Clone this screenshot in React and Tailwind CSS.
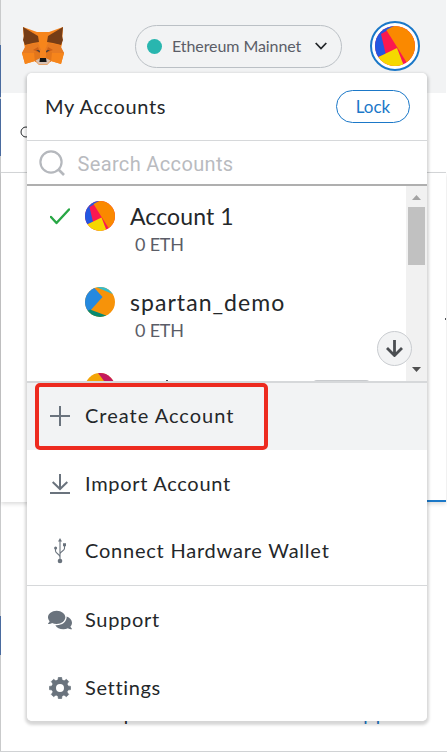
import React from "react";
import { FaComments } from "react-icons/fa";

function Fox() {
  return (
    <svg className="mt-[26px] h-[40px] w-[42px] shrink-0" viewBox="0 0 42 40">
      <path d="M1 1l14 5h12L41 1l-1 17-1 4 3 5-3 11-10-3-4 4h-8l-4-4-10 3L0 27l3-5-1-4z" fill="#f5841f" />
      <path d="M16 6h10l-2 16h-6z" fill="#f6851b" />
      <path d="M1 1l15 9 1 6-6 1-8 2-2-5 1-4z" fill="#763d16" />
      <path d="M41 1L26 10l-1 6 6 1 8 2 2-5-1-4z" fill="#763d16" />
      <path d="M0 27l4-8 12-2 3 7-7 3z" fill="#e77b22" />
      <path d="M42 27l-4-8-12-2-3 7 7 3z" fill="#e77b22" />
      <path d="M0 27h12l1 8-10 3z" fill="#f6851b" />
      <path d="M42 27H30l-1 8 10 3z" fill="#f6851b" />
      <path d="M12 26l6-1 0 8-5 3zM30 26l-6-1 0 8 5 3z" fill="#e2761b" />
      <path d="M11 24l5-3 2 6zM31 24l-5-3-2 6z" fill="#cd6116" />
      <path d="M14 24l3.500.5.5 2zM28 24l-3.500.5-.5 2z" fill="#233447" />
      <path d="M13.500 34.500l4-2h7l4 2-3.500 4h-8z" fill="#d7c1b3" />
      <path d="M18 32h6l.6 4h-7.200z" fill="#161616" />
    </svg>
  );
}

function Jazz({ kind, className }) {
  const id = React.useId();
  return (
    <svg viewBox="0 0 30 30" className={className}>
      <defs>
        <clipPath id={id}><circle cx="15" cy="15" r="15" /></clipPath>
      </defs>
      <g clipPath={`url(#${id})`}>
        {kind === "sun" && (
          <>
            <rect width="30" height="30" fill="#fb1850" />
            <path d="M0 0h15L4.500 6 8 21l-8 3z" fill="#2357e1" />
            <path d="M0 24.500L16.500 16.500 22.500 32H0z" fill="#f5d800" />
            <path d="M8.500 3L16-1h15v29l-6.500.5z" fill="#fa8900" />
          </>
        )}
        {kind === "wave" && (
          <>
            <rect width="30" height="30" fill="#f79309" />
            <path d="M0 0h8.500l9 10L5 24l-5 2z" fill="#2589df" />
            <path d="M11 0h19v8z" fill="#35bccb" />
            <path d="M5 22.500L21 28.500V30H0v-5z" fill="#088a70" />
          </>
        )}
        {kind === "berry" && (
          <>
            <rect width="30" height="30" fill="#f4a507" />
            <path d="M13 0h17v12h-8z" fill="#c4195e" />
          </>
        )}
      </g>
    </svg>
  );
}

function PlusIcon() {
  return (
    <svg width="20" height="20" viewBox="0 0 20 20" fill="none" stroke="#6a737d" strokeWidth="2">
      <path d="M10 0v20M0 10h20" />
    </svg>
  );
}

function ImportIcon() {
  return (
    <svg width="20" height="20" viewBox="0 0 20 20" fill="none" stroke="#6a737d" strokeWidth="2">
      <path d="M10 0v14.500M2.700 8l7.300 7 7.300-7M0 19h20" />
    </svg>
  );
}

function UsbIcon() {
  return (
    <svg width="12" height="26" viewBox="0 0 12 26" fill="none" stroke="#6a737d" strokeWidth="1.100" className="-ml-px">
      <path d="M6 3v20M1.500 10v3c0 2.500 4.500 3 4.500 6M10.500 7v3.500c0 2.500-4.500 3-4.500 5.500" />
      <path d="M6 0L4 3.600h4z" fill="#6a737d" stroke="none" />
      <circle cx="1.600" cy="10" r="1.500" fill="#6a737d" stroke="none" />
      <path d="M9 5.300h3v3H9z" fill="#6a737d" stroke="none" />
      <circle cx="6" cy="23" r="2.300" fill="#6a737d" stroke="none" />
    </svg>
  );
}

function GearIcon() {
  return (
    <svg width="22" height="22" viewBox="0 0 22 22" fill="none" stroke="#6a737d">
      <circle cx="11" cy="11" r="6.200" strokeWidth="4.400" />
      <g fill="#6a737d" stroke="#6a737d" strokeWidth="0.600" strokeLinejoin="round">
        {[0, 45, 90, 135, 180, 225, 270, 315].map((angle) => (
          <path key={angle} d="M9.400.3h3.200l.7 3.700H8.700z" transform={`rotate(${angle} 11 11)`} />
        ))}
      </g>
    </svg>
  );
}

function MenuItem({ icon, label, className, textClass }) {
  return (
    <div className={`flex w-full shrink-0 items-center ${className}`}>
      <span className="ml-[21px] flex w-6 justify-center text-[#6a737d]">{icon}</span>
      <span className={`-mt-[2px] ml-[13px] whitespace-nowrap text-[20px] leading-6 text-[#24272a] ${textClass}`}>{label}</span>
    </div>
  );
}

function Account({ selected, kind, name, nameClass, balance }) {
  return (
    <div className="flex h-[86px] shrink-0 items-start pt-[15px]">
      <div className="ml-[23px] mt-[7px] w-5">
        {selected && (
          <svg width="20" height="17" viewBox="0 0 20 17" fill="none" stroke="#28a745" strokeWidth="2.400">
            <path d="M1 9l5.500 6L19 1.500" strokeLinecap="round" strokeLinejoin="round" />
          </svg>
        )}
      </div>
      <Jazz kind={kind} className="ml-[15px] size-[30px] shrink-0" />
      <div className="ml-[15px] whitespace-nowrap">
        <div className={`h-[31px] text-[23px] leading-[31px] text-[#24272a] ${nameClass}`}>{name}</div>
        <div className="ml-[5px] h-6 text-[18px] leading-6 tracking-[-0.200px] text-[#5b5d67]">{balance}</div>
      </div>
    </div>
  );
}

function AccountMenu() {
  return (
    <div className="absolute left-[27px] top-[73px] flex h-[648px] w-[400px] flex-col overflow-hidden rounded-[5px] bg-white">
      <div className="flex h-[68px] shrink-0 items-center justify-between border-b border-[#d6d8da] pl-[18px] pr-[17px]">
        <span className="-mt-[2px] text-[20px] tracking-[0.650px] text-[#24272a]">My Accounts</span>
        <button className="h-[33px] w-[74px] rounded-full border border-[#1b78c8] text-[17px] leading-none text-[#1b78c8]">Lock</button>
      </div>
      <div className="flex h-[45px] shrink-0 items-center border-b-2 border-[#9b9b9b]/80">
        <svg width="26" height="26" viewBox="0 0 26 26" fill="none" stroke="#b5b8bd" strokeWidth="2.200" className="ml-3">
          <circle cx="12" cy="12" r="10.600" />
          <path d="M19 19l6 6" strokeWidth="2.600" />
        </svg>
        <span className="ml-[12.500px] mt-[2px] font-[Roboto,sans-serif] text-[20px] tracking-[0.350px] text-[#b9bbbf]">Search Accounts</span>
      </div>
      <div className="relative flex h-[195px] shrink-0">
        <div className="flex h-full flex-1 flex-col overflow-hidden">
          <Account selected kind="sun" name="Account 1" nameClass="tracking-[0.100px]" balance="0 ETH" />
          <Account kind="wave" name="spartan_demo" nameClass="tracking-[1.050px]" balance="0 ETH" />
          <div className="flex h-[86px] shrink-0 items-start pt-[15px]">
            <Jazz kind="berry" className="ml-[58px] size-[30px] shrink-0" />
            <div className="ml-auto mr-9 mt-[7px] h-5 w-[57px] rounded bg-[#c8cacd]" />
          </div>
        </div>
        <div className="absolute bottom-0 left-[139px] h-px w-[2px] bg-[#4b4e52]" />
        <div className="flex w-[21px] shrink-0 flex-col items-center bg-[#f1f1f1]">
          <svg width="9" height="5" viewBox="0 0 9 5" className="mt-[9px]"><path d="M0 5l4.500-5L9 5z" fill="#a3a3a3" /></svg>
          <div className="mt-[7px] h-[58px] w-[17px] bg-[#c1c1c1]" />
          <svg width="9" height="5" viewBox="0 0 9 5" className="mb-[9px] mt-auto"><path d="M0 0h9L4.500 5z" fill="#505050" /></svg>
        </div>
        <div className="absolute bottom-[15px] right-[15px] flex size-[35px] items-center justify-center rounded-full border border-[#c9ccd0] bg-[#f2f3f4]">
          <svg width="17" height="17" viewBox="0 0 17 17" fill="none" stroke="#4b4e52" strokeWidth="2.800">
            <path d="M8.500 0v15M1 8l7.500 7.500L16 8" />
          </svg>
        </div>
      </div>
      <MenuItem className="h-[69px] border-t-2 border-[#d6d8da] bg-[#f2f3f4] pb-[2px]" icon={<PlusIcon />} label="Create Account" textClass="tracking-[1px]" />
      <MenuItem className="h-[67px]" icon={<ImportIcon />} label="Import Account" textClass="tracking-[0.700px]" />
      <MenuItem className="h-[68px]" icon={<UsbIcon />} label="Connect Hardware Wallet" textClass="tracking-[0.780px]" />
      <MenuItem className="h-[69px] border-t border-[#d6d8da]" icon={<FaComments size={24} />} label="Support" textClass="tracking-[0.700px]" />
      <MenuItem className="h-[67px]" icon={<GearIcon />} label="Settings" textClass="tracking-[0.650px]" />
    </div>
  );
}

export default function App() {
  return (
    <div className="relative flex h-[752px] w-[447px] overflow-hidden border-b border-[#d0d2d4] bg-white font-[Lato,sans-serif]">
      <div className="flex h-full w-px shrink-0 flex-col bg-[#c9cacb]">
        <div className="mt-[45px] h-[52px] bg-[#4a6b9f]" />
        <div className="mt-[2px] h-[57px] bg-[#4a6b9f]" />
        <div className="mt-[460px] h-[39px] bg-[#4a6b9f]" />
      </div>
      <div className="flex w-[445px] flex-col">
        <header className="flex h-[93px] shrink-0 items-start bg-[#f2f3f4] pl-[21px]">
          <Fox />
          <div className="ml-[71px] mt-[25px] flex h-[43px] w-[207px] shrink-0 items-center rounded-full border border-[#bbc0c5]">
            <span className="ml-[11px] size-[15px] shrink-0 rounded-full bg-[#29b6af]" />
            <span className="-mt-[2px] ml-[10px] w-[143px] whitespace-nowrap text-[16px] tracking-[-0.080px] text-[#5b5d67]">Ethereum Mainnet</span>
            <svg width="12" height="8" viewBox="0 0 12 8" fill="none" stroke="#24272a" strokeWidth="1.800" className="-mt-px"><path d="M.7 1L6 6.500 11.300 1" /></svg>
          </div>
          <div className="ml-[28px] mt-[21px] flex size-[50px] shrink-0 items-center justify-center rounded-full border-2 border-[#1b78c8] bg-white">
            <Jazz kind="sun" className="size-10" />
          </div>
        </header>
        <div className="flex h-[80px] shrink-0 items-center border-b border-[#d6d8da] pl-[19px]">
          <svg width="12" height="12" viewBox="0 0 12 12" fill="none" stroke="#24272a" className="-mt-[2px]"><circle cx="6" cy="6" r="5" /></svg>
        </div>
        <div className="flex h-[329px] shrink-0 flex-col items-end shadow-[0_2px_4px_rgba(0,0,0,0.14)]">
          <div className="mt-[145px] h-[2px] w-px bg-[#505357]" />
          <div className="mt-auto h-[2px] w-[72px] bg-[#1b78c8]" />
        </div>
        <div className="mt-auto flex h-[47px] justify-between pl-[94px] pr-[27px] text-[19px] leading-none">
          <span className="text-[#24272a]">Help</span>
          <span className="tracking-[2px] text-[#1b78c8]">Support</span>
        </div>
      </div>
      <div className="absolute left-[27px] top-[73px] h-[648px] w-[400px] rounded-[5px] shadow-[0_2px_3px_2px_rgba(0,0,0,0.16)]" />
      <AccountMenu />
      <div className="absolute left-[35px] top-[383px] h-[67px] w-[233px] rounded-[5px] border-4 border-[#ed2a1f]" />
    </div>
  );
}
